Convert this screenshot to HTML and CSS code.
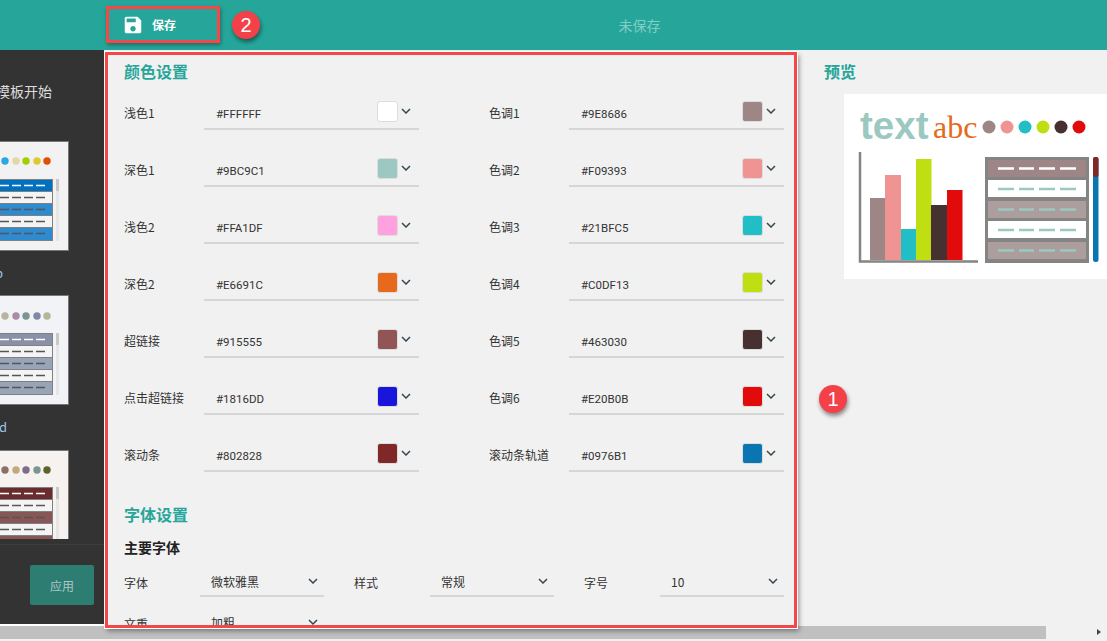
FILE: index.html
```html
<!DOCTYPE html>
<html lang="zh-CN">
<head>
    <meta charset="UTF-8">
    <meta name="viewport" content="width=device-width, initial-scale=1.0">
    <title>主题设置</title>
    <link rel="stylesheet" href="styles.css">
</head>
<body>

    <header class="topbar">
        <button class="save-button">
            <svg class="save-icon" viewBox="0 0 24 24"><path d="M17 3H5c-1.11 0-2 .9-2 2v14c0 1.1.89 2 2 2h14c1.1 0 2-.9 2-2V7l-4-4zm-5 16c-1.66 0-3-1.34-3-3s1.34-3 3-3 3 1.34 3 3-1.34 3-3 3zm3-10H5V5h10v4z"/></svg>
            保存
        </button>
        <span class="badge badge-save">2</span>
        <div class="status">未保存</div>
    </header>

    <div class="content">
        <aside class="sidebar">
            <div class="sidebar-title">从模板开始</div>
            <div class="theme-list">
                <svg class="theme-thumb" viewBox="0 0 69 110">
                    <rect x="-1" y="0.5" width="69.5" height="109" fill="#f2f2f2" stroke="#777"/>
                    <circle cx="5" cy="20" r="3.7" fill="#2aa8e0"/><circle cx="16" cy="20" r="3.7" fill="#e0d8a8"/><circle cx="26" cy="20" r="3.7" fill="#a0d000"/><circle cx="37" cy="20" r="3.7" fill="#e0c830"/><circle cx="47" cy="20" r="3.7" fill="#e05000"/>
                    <rect x="-1" y="38" width="54" height="62" fill="#808080"/>
                    <rect x="-1" y="39" width="53" height="11" fill="#0070c0"/><rect x="-1" y="51" width="53" height="11" fill="#f4f4f4"/><rect x="-1" y="63" width="53" height="11" fill="#2e8bd0"/><rect x="-1" y="75" width="53" height="11" fill="#f4f4f4"/><rect x="-1" y="87" width="53" height="12" fill="#2e8bd0"/>
                    <path d="M0 44.500h9M12 44.500h9M24 44.500h9M36 44.500h9" stroke="#fff" stroke-width="1.500"/>
                    <path d="M0 56.500h9M12 56.500h9M24 56.500h9M36 56.500h9M0 68.500h9M12 68.500h9M24 68.500h9M36 68.500h9M0 80.500h9M12 80.500h9M24 80.500h9M36 80.500h9M0 92.500h9M12 92.500h9M24 92.500h9M36 92.500h9" stroke="#555" stroke-width="1.500"/>
                    <rect x="56" y="38" width="3" height="62" fill="#e6e6e6"/><rect x="56" y="38" width="3" height="12" fill="#c8c8c8"/>
                </svg>
                <div class="theme-name">Temp</div>
                <svg class="theme-thumb" viewBox="0 0 69 110">
                    <rect x="-1" y="0.5" width="69.5" height="109" fill="#f2f3f6" stroke="#777"/>
                    <circle cx="5" cy="21" r="3.7" fill="#b8b4a0"/><circle cx="16" cy="21" r="3.7" fill="#a88ca8"/><circle cx="26" cy="21" r="3.7" fill="#7d9490"/><circle cx="37" cy="21" r="3.7" fill="#8088a8"/><circle cx="47" cy="21" r="3.7" fill="#b0b898"/>
                    <rect x="-1" y="38" width="54" height="62" fill="#808080"/>
                    <rect x="-1" y="39" width="53" height="11" fill="#8891a8"/><rect x="-1" y="51" width="53" height="11" fill="#f4f4f4"/><rect x="-1" y="63" width="53" height="11" fill="#98a4b8"/><rect x="-1" y="75" width="53" height="11" fill="#f4f4f4"/><rect x="-1" y="87" width="53" height="12" fill="#98a4b8"/>
                    <path d="M0 44.500h9M12 44.500h9M24 44.500h9M36 44.500h9" stroke="#fff" stroke-width="1.500"/>
                    <path d="M0 56.500h9M12 56.500h9M24 56.500h9M36 56.500h9M0 68.500h9M12 68.500h9M24 68.500h9M36 68.500h9M0 80.500h9M12 80.500h9M24 80.500h9M36 80.500h9M0 92.500h9M12 92.500h9M24 92.500h9M36 92.500h9" stroke="#555" stroke-width="1.500"/>
                    <rect x="56" y="38" width="3" height="62" fill="#e6e6e6"/><rect x="56" y="38" width="3" height="12" fill="#c8c8c8"/>
                </svg>
                <div class="theme-name theme-name-wide">Red</div>
                <svg class="theme-thumb" viewBox="0 0 69 110">
                    <rect x="-1" y="0.5" width="69.5" height="109" fill="#f5f2ef" stroke="#777"/>
                    <circle cx="5" cy="20" r="3.7" fill="#8c7068"/><circle cx="16" cy="20" r="3.7" fill="#c4a878"/><circle cx="26" cy="20" r="3.7" fill="#7d6c8c"/><circle cx="37" cy="20" r="3.7" fill="#7d9490"/><circle cx="47" cy="20" r="3.7" fill="#5c6428"/>
                    <rect x="-1" y="37" width="54" height="62" fill="#808080"/>
                    <rect x="-1" y="38" width="53" height="11" fill="#6a2c2c"/><rect x="-1" y="50" width="53" height="11" fill="#f4f4f4"/><rect x="-1" y="62" width="53" height="11" fill="#885656"/><rect x="-1" y="74" width="53" height="11" fill="#f4f4f4"/><rect x="-1" y="86" width="53" height="12" fill="#885656"/>
                    <path d="M0 43.500h9M12 43.500h9M24 43.500h9M36 43.500h9" stroke="#fff" stroke-width="1.500"/>
                    <path d="M0 55.500h9M12 55.500h9M24 55.500h9M36 55.500h9M0 67.500h9M12 67.500h9M24 67.500h9M36 67.500h9M0 79.500h9M12 79.500h9M24 79.500h9M36 79.500h9" stroke="#555" stroke-width="1.500"/>
                    <rect x="56" y="37" width="3" height="62" fill="#e6e6e6"/><rect x="56" y="37" width="3" height="12" fill="#c8c8c8"/>
                </svg>
            </div>
            <div class="sidebar-foot">
                <button class="apply-button">应用</button>
            </div>
        </aside>

        <main class="panel">
            <h2 class="section-title">颜色设置</h2>
            <div class="color-grid">
                <div class="color-label">浅色1</div>
                <div class="color-field"><span>#FFFFFF</span><i class="swatch swatch-white"></i><svg class="chevron" viewBox="0 0 10 6"><path d="M1 1l4 4 4-4"/></svg></div>
                <div class="color-label">色调1</div>
                <div class="color-field"><span>#9E8686</span><i class="swatch" style="background:#9E8686"></i><svg class="chevron" viewBox="0 0 10 6"><path d="M1 1l4 4 4-4"/></svg></div>

                <div class="color-label">深色1</div>
                <div class="color-field"><span>#9BC9C1</span><i class="swatch" style="background:#9BC9C1"></i><svg class="chevron" viewBox="0 0 10 6"><path d="M1 1l4 4 4-4"/></svg></div>
                <div class="color-label">色调2</div>
                <div class="color-field"><span>#F09393</span><i class="swatch" style="background:#F09393"></i><svg class="chevron" viewBox="0 0 10 6"><path d="M1 1l4 4 4-4"/></svg></div>

                <div class="color-label">浅色2</div>
                <div class="color-field"><span>#FFA1DF</span><i class="swatch" style="background:#FFA1DF"></i><svg class="chevron" viewBox="0 0 10 6"><path d="M1 1l4 4 4-4"/></svg></div>
                <div class="color-label">色调3</div>
                <div class="color-field"><span>#21BFC5</span><i class="swatch" style="background:#21BFC5"></i><svg class="chevron" viewBox="0 0 10 6"><path d="M1 1l4 4 4-4"/></svg></div>

                <div class="color-label">深色2</div>
                <div class="color-field"><span>#E6691C</span><i class="swatch" style="background:#E6691C"></i><svg class="chevron" viewBox="0 0 10 6"><path d="M1 1l4 4 4-4"/></svg></div>
                <div class="color-label">色调4</div>
                <div class="color-field"><span>#C0DF13</span><i class="swatch" style="background:#C0DF13"></i><svg class="chevron" viewBox="0 0 10 6"><path d="M1 1l4 4 4-4"/></svg></div>

                <div class="color-label">超链接</div>
                <div class="color-field"><span>#915555</span><i class="swatch" style="background:#915555"></i><svg class="chevron" viewBox="0 0 10 6"><path d="M1 1l4 4 4-4"/></svg></div>
                <div class="color-label">色调5</div>
                <div class="color-field"><span>#463030</span><i class="swatch" style="background:#463030"></i><svg class="chevron" viewBox="0 0 10 6"><path d="M1 1l4 4 4-4"/></svg></div>

                <div class="color-label">点击超链接</div>
                <div class="color-field"><span>#1816DD</span><i class="swatch" style="background:#1816DD"></i><svg class="chevron" viewBox="0 0 10 6"><path d="M1 1l4 4 4-4"/></svg></div>
                <div class="color-label">色调6</div>
                <div class="color-field"><span>#E20B0B</span><i class="swatch" style="background:#E20B0B"></i><svg class="chevron" viewBox="0 0 10 6"><path d="M1 1l4 4 4-4"/></svg></div>

                <div class="color-label">滚动条</div>
                <div class="color-field"><span>#802828</span><i class="swatch" style="background:#802828"></i><svg class="chevron" viewBox="0 0 10 6"><path d="M1 1l4 4 4-4"/></svg></div>
                <div class="color-label">滚动条轨道</div>
                <div class="color-field"><span>#0976B1</span><i class="swatch" style="background:#0976B1"></i><svg class="chevron" viewBox="0 0 10 6"><path d="M1 1l4 4 4-4"/></svg></div>
            </div>

            <h2 class="section-title font-title">字体设置</h2>
            <h3 class="sub-title">主要字体</h3>
            <div class="font-grid">
                <div class="font-field"><label>字体</label><div class="select"><span>微软雅黑</span><svg class="chevron" viewBox="0 0 10 6"><path d="M1 1l4 4 4-4"/></svg></div></div>
                <div class="font-field"><label>样式</label><div class="select"><span>常规</span><svg class="chevron" viewBox="0 0 10 6"><path d="M1 1l4 4 4-4"/></svg></div></div>
                <div class="font-field"><label>字号</label><div class="select"><span>10</span><svg class="chevron" viewBox="0 0 10 6"><path d="M1 1l4 4 4-4"/></svg></div></div>
                <div class="font-field"><label>文重</label><div class="select"><span>加粗</span><svg class="chevron" viewBox="0 0 10 6"><path d="M1 1l4 4 4-4"/></svg></div></div>
            </div>
        </main>

        <section class="preview">
            <h2 class="section-title">预览</h2>
            <svg class="preview-card" viewBox="0 0 263 185">
                <rect width="263" height="185" fill="#fff"/>
                <text x="16" y="45" class="preview-text">text</text>
                <text x="89" y="44" class="preview-abc">abc</text>
                <circle cx="145" cy="33" r="6.5" fill="#9E8686"/><circle cx="163" cy="33" r="6.5" fill="#F09393"/><circle cx="181" cy="33" r="6.5" fill="#21BFC5"/><circle cx="199" cy="33" r="6.5" fill="#C0DF13"/><circle cx="217" cy="33" r="6.5" fill="#463030"/><circle cx="235" cy="33" r="6.5" fill="#E20B0B"/>
                <!-- chart -->
                <rect x="26" y="104" width="15.5" height="62" fill="#9E8686"/>
                <rect x="41" y="81" width="16" height="85" fill="#F09393"/>
                <rect x="57" y="135" width="15.5" height="31" fill="#21BFC5"/>
                <rect x="72" y="65" width="15.5" height="101" fill="#C0DF13"/>
                <rect x="87" y="111" width="16" height="55" fill="#463030"/>
                <rect x="103" y="96" width="15.5" height="70" fill="#E20B0B"/>
                <path d="M16 58v109.500h118" fill="none" stroke="#848484" stroke-width="2.500"/>
                <!-- table -->
                <rect x="141" y="63" width="104" height="106" fill="#848484"/>
                <rect x="144" y="66" width="98" height="17" fill="#9E8686"/>
                <rect x="144" y="86" width="98" height="17" fill="#fff"/>
                <rect x="144" y="107" width="98" height="17" fill="#AD9E9E"/>
                <rect x="144" y="127" width="98" height="17" fill="#fff"/>
                <rect x="144" y="148" width="98" height="17" fill="#AD9E9E"/>
                <path d="M154 74.500h16M175 74.500h15M195 74.500h16M216 74.500h16" stroke="#fff" stroke-width="2.500"/>
                <path d="M154 95h16M175 95h15M195 95h16M216 95h16M154 115.500h16M175 115.500h15M195 115.500h16M216 115.500h16M154 136h16M175 136h15M195 136h16M216 136h16M154 156.500h16M175 156.500h15M195 156.500h16M216 156.500h16" stroke="#9BC9C1" stroke-width="2.500"/>
                <!-- scrollbar -->
                <rect x="249" y="63" width="5.500" height="105" rx="2.500" fill="#0976B1"/>
                <rect x="249" y="63" width="5.500" height="20" rx="2" fill="#802828"/>
            </svg>
            <span class="badge badge-panel">1</span>
        </section>
    </div>

    <div class="hscroll">
        <div class="hscroll-thumb"></div>
        <i class="hscroll-arrow"></i>
    </div>

</body>
</html>
```

FILE: styles.css
```css
* {
    box-sizing: border-box;
}

body {
    margin: 0;
    height: 641px;
    overflow: hidden;
    background-color: #f1f1f1;
    color: #333;
    font-family: "Noto Sans CJK SC", "Noto Sans", sans-serif;
    font-size: 12px;
}

/* Top bar */
.topbar {
    display: flex;
    align-items: flex-start;
    height: 50px;
    padding: 6px 48px 0 106px;
    background-color: #26a69a;
}

.save-button {
    display: flex;
    align-items: center;
    gap: 8px;
    width: 114px;
    height: 37px;
    padding: 0 0 0 13px;
    border: 3px solid #f44848;
    background: transparent;
    color: white;
    font-family: inherit;
    font-size: 12px;
    font-weight: bold;
    box-shadow: 1px 2px 4px rgba(0, 0, 0, 0.35);
}

.save-icon {
    width: 22px;
    height: 22px;
    fill: white;
}

.status {
    flex: 1;
    padding-top: 7px;
    text-align: center;
    font-size: 14px;
    line-height: 24px;
    color: #7fcfc5;
}

/* Red number marks over the page */
.badge {
    position: absolute;
    width: 28px;
    height: 28px;
    border-radius: 50%;
    background-color: #f44048;
    color: white;
    font-family: "Liberation Sans", sans-serif;
    font-size: 20px;
    line-height: 28px;
    text-align: center;
    box-shadow: 1px 3px 4px rgba(0, 0, 0, 0.45);
    z-index: 2;
}

.badge-save {
    left: 232px;
    top: 11px;
}

.badge-panel {
    left: 819px;
    top: 385px;
}

/* Body area */
.content {
    display: flex;
    height: 576px;
}

.sidebar {
    display: flex;
    flex-direction: column;
    width: 104px;
    height: 576px;
    background-color: #333;
    border-bottom: 2px solid white;
    color: #ddd;
    overflow: hidden;
}

.sidebar-title {
    margin: 31px 0 40px -18px;
    font-size: 14px;
    line-height: 20px;
    white-space: nowrap;
}

.theme-list {
    flex: 1;
    overflow: hidden;
}

.theme-thumb {
    display: block;
    width: 69px;
    height: 110px;
}

.theme-name {
    width: 3px;
    direction: rtl;
    height: 44px;
    font-size: 13px;
    line-height: 44px;
    white-space: nowrap;
    color: #9cc4e8;
}

.theme-name-wide {
    width: 7px;
    height: 45px;
}

.sidebar-foot {
    display: flex;
    flex: none;
    justify-content: flex-end;
    height: 80px;
    margin-top: 5px;
    padding: 20px 10px 0 0;
    border-top: 1px solid #3e3e3e;
}

.apply-button {
    width: 64px;
    height: 40px;
    border: none;
    border-radius: 2px;
    background-color: #2e7d73;
    color: #a8c8c4;
    font-family: inherit;
    font-size: 12px;
}

/* Settings panel */
.panel {
    position: relative;
    z-index: 1;
    flex: none;
    width: 692px;
    height: 576px;
    margin: 2px 0 0 1px;
    padding: 4px 10px 0 16px;
    border: 3px solid #f44848;
    background-color: #f1f1f1;
    box-shadow: 0 0 0 1px white, 2px 3px 5px rgba(0, 0, 0, 0.4);
    overflow: hidden;
}

.section-title {
    margin: 0;
    font-size: 16px;
    font-weight: bold;
    line-height: 24px;
    color: #26a69a;
}

.color-grid {
    display: grid;
    grid-template-columns: 80px 215px 70px 80px 215px;
    grid-auto-rows: 32px;
    row-gap: 25px;
    align-items: center;
    margin-top: 15px;
}

.color-grid > .color-label:nth-child(4n + 3) {
    grid-column: 4;
}

.color-label {
    padding-bottom: 4px;
}

.color-field {
    display: flex;
    align-items: center;
    height: 32px;
    padding-left: 12px;
    border-bottom: 2px solid #d6d6d6;
    font-family: Roboto, sans-serif;
    font-size: 11.5px;
}

.color-field span {
    flex: 1;
    padding-top: 1px;
}

.swatch {
    width: 21px;
    height: 21px;
    margin-top: -4px;
    border: 1px solid #ddd;
    border-radius: 3px;
}

.swatch-white {
    background-color: white;
}

.chevron {
    flex: none;
    width: 10px;
    height: 6px;
    fill: none;
    stroke: #37474f;
    stroke-width: 1.5;
}

.color-field .chevron {
    margin: -4px 8px 0 3px;
}

.font-title {
    margin-top: 30px;
}

.sub-title {
    margin: 11px 0 0;
    font-size: 14px;
    font-weight: bold;
    line-height: 20px;
    color: #222;
}

.font-grid {
    display: grid;
    grid-template-columns: repeat(3, 200px);
    grid-auto-rows: 28px;
    column-gap: 30px;
    row-gap: 13px;
    margin-top: 12px;
}

.font-field {
    display: flex;
    align-items: center;
}

.font-field label {
    width: 76px;
    padding-bottom: 2px;
}

.select {
    display: flex;
    align-items: center;
    justify-content: space-between;
    width: 124px;
    height: 28px;
    padding: 0 6px 2px 11px;
    border-bottom: 2px solid #d6d6d6;
}

/* Preview column */
.preview {
    flex: 1;
    min-width: 0;
    padding: 9px 0 0 27px;
}

.preview-card {
    display: block;
    width: 263px;
    height: 185px;
    margin: 11px 0 0 20px;
}

.preview-text {
    font-family: "Liberation Sans", sans-serif;
    font-size: 38.5px;
    font-weight: bold;
    fill: #9BC9C1;
}

.preview-abc {
    font-family: "Liberation Serif", serif;
    font-size: 32px;
    fill: #E6691C;
}

/* Horizontal scrollbar */
.hscroll {
    position: relative;
    height: 13px;
    background-color: #f1f1f1;
}

.hscroll-thumb {
    width: 1046px;
    height: 13px;
    background-color: #c0c0c0;
}

.hscroll-arrow {
    position: absolute;
    left: 1097px;
    top: 3px;
    border-left: 4px solid #444;
    border-top: 3.500px solid transparent;
    border-bottom: 3.500px solid transparent;
}
```
